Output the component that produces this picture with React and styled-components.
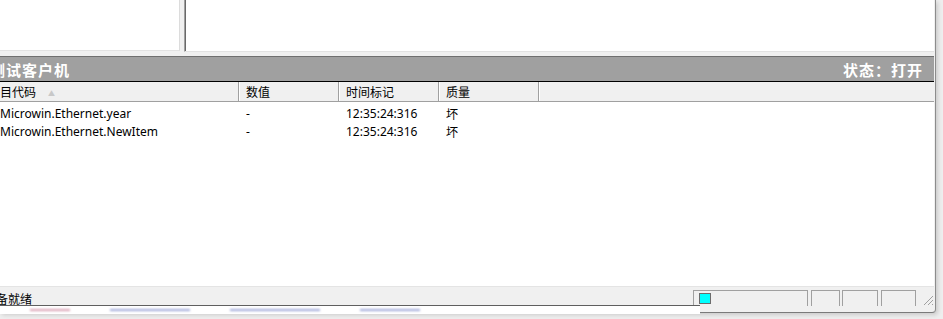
import styled, { createGlobalStyle } from "styled-components";

const GlobalStyle = createGlobalStyle`
  html, body {
    margin: 0;
    padding: 0;
    width: 943px;
    height: 319px;
    overflow: hidden;
    background: #eeeeee;
  }
`;

const Desktop = styled.div`
  position: relative;
  width: 943px;
  height: 319px;
  overflow: hidden;
  font-family: "Noto Sans", "Noto Sans CJK SC", sans-serif;
`;

const Window = styled.div`
  width: 935px;
  height: 312px;
  display: flex;
  flex-direction: column;
  background: #f0f0f0;
  border-right: 1px solid #8c8c8c;
  border-bottom: 1px solid #7a7a7a;
  border-bottom-right-radius: 4px;
  box-shadow: 2px 2px 4px rgba(0, 0, 0, 0.15);
`;

const TopSplit = styled.div`
  display: flex;
  height: 52px;
  gap: 4px;
`;

const LeftPane = styled.div`
  width: 179px;
  height: 50px;
  background: #fff;
  border-right: 1px solid #dcdcdc;
  border-bottom: 1px solid #e2e2e2;
`;

const RightPane = styled.div`
  flex: 1;
  height: 51px;
  background: #fff;
  border-left: 1px solid #a0a0a0;
  box-shadow: inset 1px 0 0 #696969;
  border-bottom: 1px solid #e2e2e2;
  margin-right: 1px;
`;

const Lower = styled.div`
  flex: 1;
  margin-top: 4px;
  display: flex;
  flex-direction: column;
  margin-right: 1px;
`;

const TitleBar = styled.div`
  height: 24px;
  background: #a0a0a0;
  border-top: 1px solid #6f6f6f;
  border-bottom: 1px solid #000;
  display: flex;
  align-items: center;
  justify-content: space-between;
  color: #fff;
  font-family: "Noto Sans CJK SC", sans-serif;
  font-weight: bold;
  font-size: 15px;
  padding-right: 11px;
`;

const TitleText = styled.span`
  margin-left: ${(p) => p.$shift || 0}px;
  letter-spacing: 1px;
  white-space: nowrap;
`;

const Header = styled.div`
  display: flex;
  height: 19px;
  background: #f0f0f0;
  border-bottom: 1px solid #a0a0a0;
  font-size: 12px;
  font-family: "Noto Sans CJK SC", sans-serif;
  color: #000;
`;

const HeaderCell = styled.div`
  width: ${(p) => p.$w}px;
  display: flex;
  align-items: center;
  gap: 12px;
  padding-left: ${(p) => p.$pad}px;
  box-sizing: border-box;
  border-right: 1px solid #a0a0a0;
  box-shadow: 1px 0 0 #fff;
  white-space: nowrap;
`;

const Clipped = styled.span`
  margin-left: -12px;
`;

const SortArrow = styled.span`
  font-size: 7px;
  color: #c8c8c8;
  margin-top: 2px;
`;

const Body = styled.div`
  flex: 1;
  background: #fff;
  padding-top: 2px;
`;

const Row = styled.div`
  display: flex;
  height: 18px;
  align-items: center;
  font-size: 12px;
  color: #000;
`;

const Cell = styled.div`
  width: ${(p) => p.$w}px;
  padding-left: ${(p) => p.$pad}px;
  box-sizing: border-box;
  white-space: nowrap;
  font-family: ${(p) =>
    p.$cjk ? '"Noto Sans CJK SC", sans-serif' : '"Noto Sans", sans-serif'};
`;

const StatusBar = styled.div`
  height: 26px;
  border-top: 1px solid #e4e4e4;
  display: flex;
  align-items: flex-start;
  padding-top: 3px;
  box-sizing: border-box;
  font-size: 12px;
  font-family: "Noto Sans CJK SC", sans-serif;
`;

const StatusText = styled.div`
  flex: 1;
  margin-left: -16px;
  line-height: 17px;
  white-space: nowrap;
`;

const Panel = styled.div`
  width: ${(p) => p.$w}px;
  height: 16px;
  margin-right: ${(p) => p.$gap}px;
  border-top: 1px solid #a0a0a0;
  border-left: 1px solid #a0a0a0;
  border-right: 1px solid #a0a0a0;
  box-sizing: border-box;
  display: flex;
  align-items: center;
  padding-left: 5px;
`;

const Led = styled.div`
  width: 12px;
  height: 11px;
  background: #00ffff;
  border: 1px solid #6c6c6c;
  box-sizing: border-box;
`;

const Grip = styled.svg`
  width: 12px;
  height: 12px;
  margin-top: 4px;
`;

const BackWindow = styled.div`
  position: absolute;
  left: 0;
  top: 305px;
  width: 670px;
  height: 8px;
  background: #fff;
  border-top: 1px solid #5f5f5f;
  display: flex;
  gap: 40px;
  padding-left: 30px;
  align-items: center;
`;

const Blur = styled.div`
  width: ${(p) => p.$w}px;
  height: 2px;
  background: ${(p) => p.$c};
  filter: blur(1px);
  opacity: 0.6;
`;

const columns = [
  { w: 239, pad: 0 },
  { w: 100, pad: 7 },
  { w: 100, pad: 7 },
  { w: 100, pad: 7 },
];

const rows = [
  ["Microwin.Ethernet.year", "-", "12:35:24:316", "坏"],
  ["Microwin.Ethernet.NewItem", "-", "12:35:24:316", "坏"],
];

export default function App() {
  return (
    <Desktop>
      <GlobalStyle />
      <Window>
        <TopSplit>
          <LeftPane />
          <RightPane />
        </TopSplit>
        <Lower>
          <TitleBar>
            <TitleText $shift={-10}>测试客户机</TitleText>
            <TitleText>状态：打开</TitleText>
          </TitleBar>
          <Header>
            <HeaderCell $w={239} $pad={0}>
              <Clipped>项目代码</Clipped>
              <SortArrow>▲</SortArrow>
            </HeaderCell>
            <HeaderCell $w={100} $pad={7}>数值</HeaderCell>
            <HeaderCell $w={100} $pad={7}>时间标记</HeaderCell>
            <HeaderCell $w={100} $pad={7}>质量</HeaderCell>
          </Header>
          <Body>
            {rows.map((r, i) => (
              <Row key={i}>
                {r.map((v, j) => (
                  <Cell key={j} $w={columns[j].w} $pad={columns[j].pad} $cjk={j === 3}>
                    {v}
                  </Cell>
                ))}
              </Row>
            ))}
          </Body>
          <StatusBar>
            <StatusText>准备就绪</StatusText>
            <Panel $w={115} $gap={3}>
              <Led />
            </Panel>
            <Panel $w={29} $gap={2} />
            <Panel $w={36} $gap={3} />
            <Panel $w={35} $gap={6} />
            <Grip viewBox="0 0 12 12">
              <path d="M11 2 L2 11 M11 6 L6 11 M11 10 L10 11" stroke="#a0a0a0" strokeWidth="1" />
            </Grip>
          </StatusBar>
        </Lower>
      </Window>
      <BackWindow>
        <Blur $w={40} $c="#c06080" />
        <Blur $w={80} $c="#6070c0" />
        <Blur $w={90} $c="#6070c0" />
        <Blur $w={60} $c="#6070c0" />
      </BackWindow>
    </Desktop>
  );
}
